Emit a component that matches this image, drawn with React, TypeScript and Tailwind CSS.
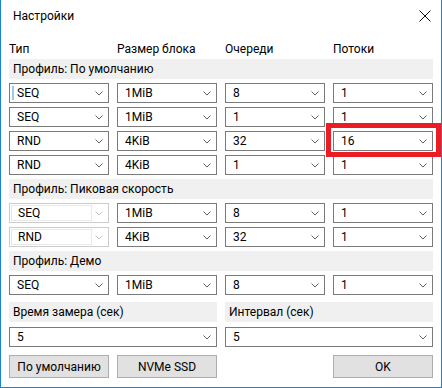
import React from "react";

const font = { fontFamily: 'Roboto, "Noto Sans", sans-serif' };

const Chevron = ({ disabled }: { disabled?: boolean }) => (
  <svg width="8" height="5" viewBox="0 0 8 5" className="shrink-0">
    <path
      d="M0.5 0.5 L4 4 L7.5 0.5"
      fill="none"
      stroke={disabled ? "#c4c4c4" : "#606060"}
      strokeWidth="1"
    />
  </svg>
);

type ComboProps = { value: string; disabled?: boolean; caret?: boolean };

const Combo = ({ value, disabled, caret }: ComboProps) => {
  if (disabled) {
    return (
      <div className="h-[20px] border border-[#cccccc] bg-white flex items-center pr-[5px]">
        <div className="ml-[1px] h-[16px] flex-1 border border-[#e8e8e8] flex items-center pl-[6px] mr-[3px] text-black">
          {value}
        </div>
        <Chevron disabled />
      </div>
    );
  }
  return (
    <div className="h-[20px] border border-[#7a7a7a] bg-white flex items-center pl-[7px] pr-[5px] relative">
      {caret && (
        <div className="absolute left-[2px] top-[2px] w-[2px] h-[14px] bg-[#99c9ef]" />
      )}
      <span className="flex-1 text-black leading-none">{value}</span>
      <Chevron />
    </div>
  );
};

const Band = ({ label, mt }: { label: string; mt: string }) => (
  <div className={`${mt} h-[20px] bg-[#f0f0f0] flex items-center pl-[4px] text-black`}>
    {label}
  </div>
);

type Row = { cells: string[]; disabledFirst?: boolean; caret?: boolean };

const Rows = ({ rows }: { rows: Row[] }) => (
  <div className="mt-[4px] flex flex-col gap-[4px]">
    {rows.map((r, i) => (
      <div key={i} className="grid grid-cols-4 gap-[8px]">
        {r.cells.map((c, j) => (
          <Combo
            key={j}
            value={c}
            disabled={j === 0 && r.disabledFirst}
            caret={j === 0 && r.caret}
          />
        ))}
      </div>
    ))}
  </div>
);

const Button = ({ label }: { label: string }) => (
  <div className="h-[23px] bg-[#e1e1e1] border border-[#adadad] flex items-center justify-center text-black">
    {label}
  </div>
);

export default function App() {
  return (
    <div
      className="w-[442px] h-[388px] bg-white border-x border-b border-[#1883d7] relative text-[12px] overflow-hidden"
      style={font}
    >
      {/* заголовок окна */}
      <div className="h-[31px] flex items-center justify-between pl-[12px] pr-[10px]">
        <span className="text-black text-[12px]">Настройки</span>
        <svg width="12" height="12" viewBox="0 0 12 12">
          <path d="M0.5 0.5 L11.5 11.5 M11.5 0.5 L0.5 11.5" stroke="#111" strokeWidth="1" />
        </svg>
      </div>

      <div className="px-[8px]">
        <div className="mt-[9px] h-[16px] grid grid-cols-4 gap-[8px] items-center text-black">
          <span>Тип</span>
          <span>Размер блока</span>
          <span>Очереди</span>
          <span>Потоки</span>
        </div>

        <Band label="Профиль: По умолчанию" mt="mt-[3px]" />
        <Rows
          rows={[
            { cells: ["SEQ", "1MiB", "8", "1"], caret: true },
            { cells: ["SEQ", "1MiB", "1", "1"] },
            { cells: ["RND", "4KiB", "32", "16"] },
            { cells: ["RND", "4KiB", "1", "1"] },
          ]}
        />

        <Band label="Профиль: Пиковая скорость" mt="mt-[4px]" />
        <Rows
          rows={[
            { cells: ["SEQ", "1MiB", "8", "1"], disabledFirst: true },
            { cells: ["RND", "4KiB", "32", "1"], disabledFirst: true },
          ]}
        />

        <Band label="Профиль: Демо" mt="mt-[4px]" />
        <Rows rows={[{ cells: ["SEQ", "1MiB", "8", "1"] }]} />

        <div className="mt-[7px] grid grid-cols-2 gap-[8px]">
          <div className="h-[20px] bg-[#f0f0f0] flex items-center pl-[4px] text-black">
            Время замера (сек)
          </div>
          <div className="h-[20px] bg-[#f0f0f0] flex items-center pl-[4px] text-black">
            Интервал (сек)
          </div>
        </div>
        <div className="mt-[5px] grid grid-cols-2 gap-[8px]">
          <Combo value="5" />
          <Combo value="5" />
        </div>

        <div className="mt-[8px] grid grid-cols-4 gap-[8px]">
          <Button label="По умолчанию" />
          <Button label="NVMe SSD" />
          <div />
          <Button label="OK" />
        </div>
      </div>

      {/* красная рамка выделения */}
      <div className="absolute left-[325px] top-[123px] w-[115px] h-[34px] border-[5px] border-[#ec1c24]" />
    </div>
  );
}
